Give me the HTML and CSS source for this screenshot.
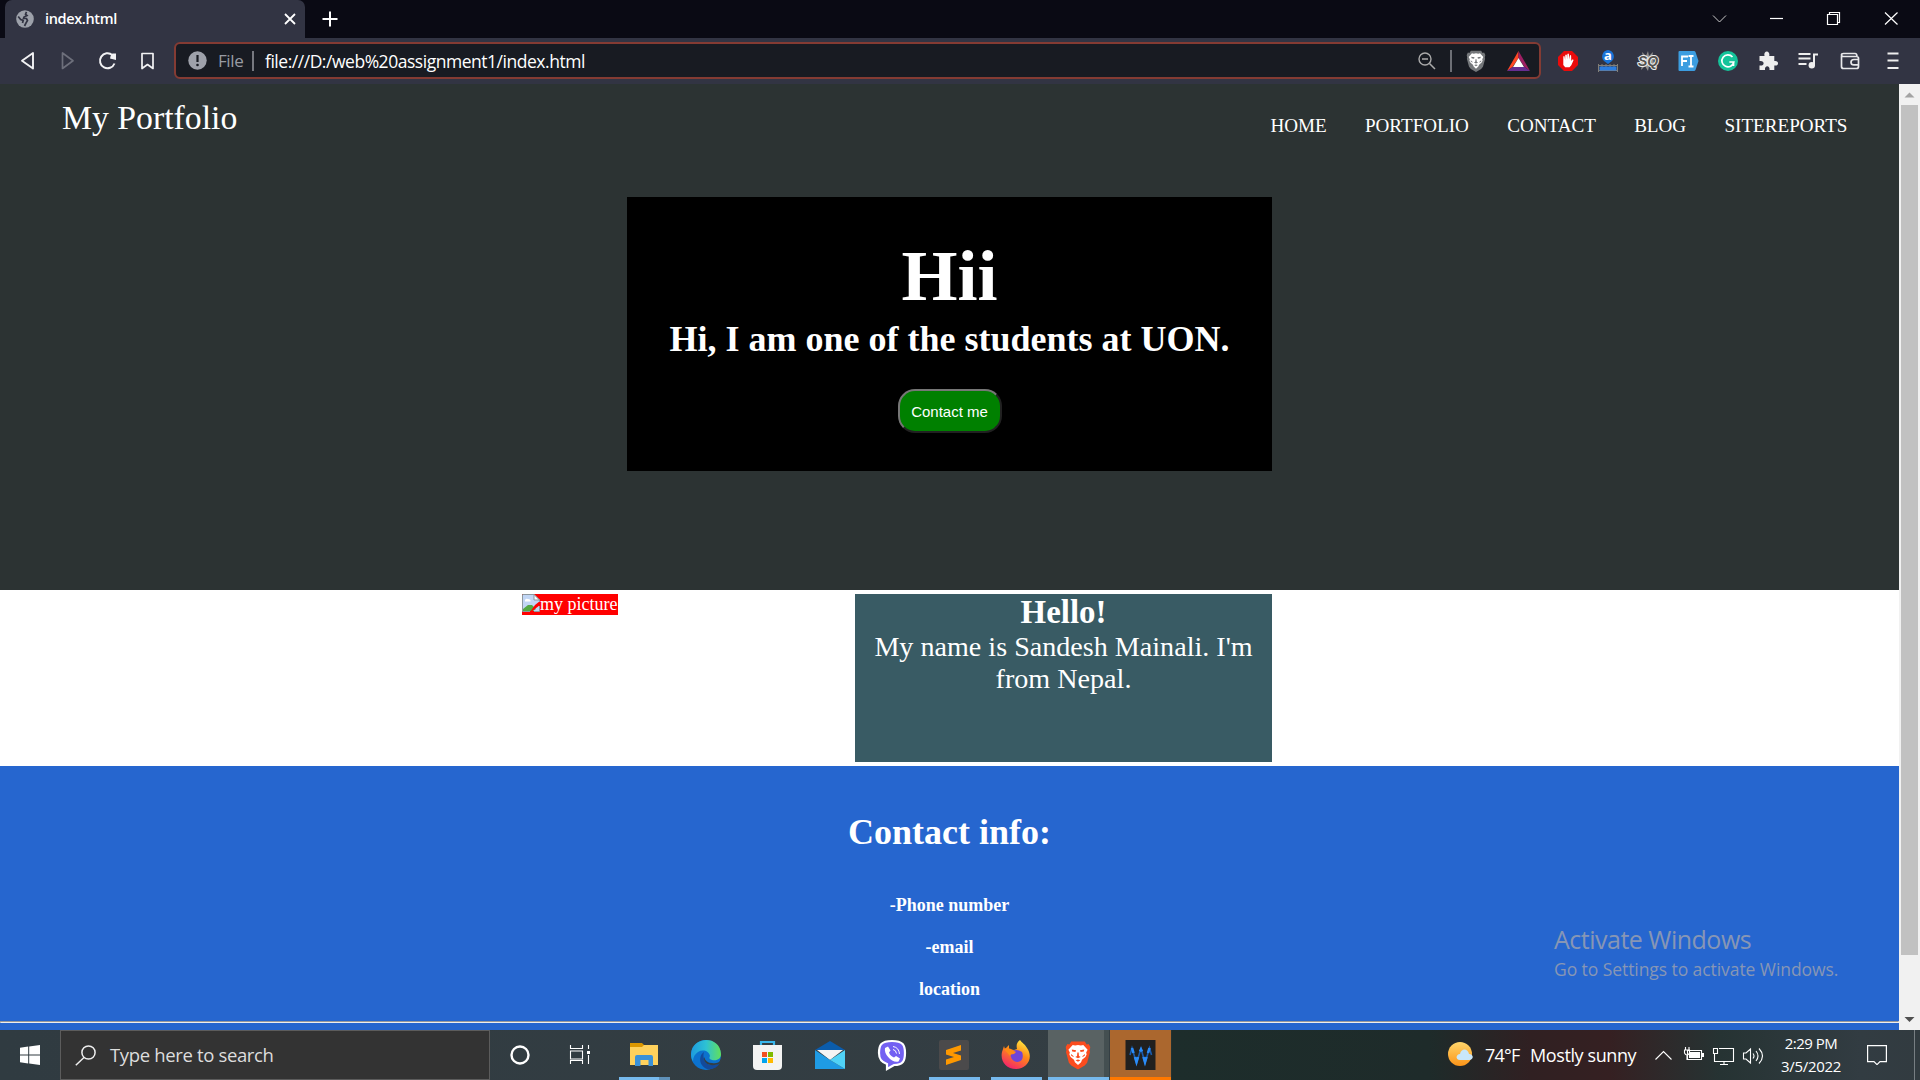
FILE: index.html
```html
<!DOCTYPE html>
<html lang="en">
<head>
<meta charset="utf-8">
<title>index.html</title>
<link rel="stylesheet" href="styles.css">
</head>
<body>
<svg class="defs" width="0" height="0">
  <symbol id="lion" viewBox="0 0 26 30">
    <path d="M6 1h14l2 3 2-.5 2 3.500-1 3 .5 2-3 11-2.500 3L13 30l-7-4-2.500-3L.5 12 1 10 0 7l2-3.500L4 4z"/>
    <path fill="#fff" d="M7.500 4.500l2.500.7 3-.7 3 .7 2.500-.7 4.500 5-1.500 3 .5 2-1.300 2.500-3.500 3-1 2.500L13 25.500l-3.200-3L8.800 20l-3.500-3L4 14.500l.5-2L3 9.500z"/>
    <path d="M6.500 9.200l4.500.8-.7 2-3.300-.6zM19.500 9.200l-4.500.8.700 2 3.300-.6zM12.300 12.500h1.400l.3 3.500 1.800 1L13 18.500 10.200 17l1.800-1zM5.800 14l2.700 2.200-.4 1L5.800 15.600zM20.200 14l-2.700 2.200.4 1 2.300-1.600zM10.500 20.500l2.500-.8 2.500.8L13 22z"/>
  </symbol>
</svg>

<header class="tabs">
  <div class="tab">
    <svg width="18" height="18" viewBox="0 0 18 18"><circle cx="9" cy="9" r="8.800" fill="#9da1aa"/><path d="M10.500 1.800l-1 2.400 1.500 1.300-3 1.500-.5 1.500h3l1 2-1.500 2.500-1.500 3M2.200 6.500l2.500 3 2.500 1-.7 2.500" fill="none" stroke="#323443" stroke-width="1.700"/></svg>
    <span class="tab-title">index.html</span>
    <svg width="12" height="12" viewBox="0 0 12 12"><path d="M1 1l10 10M11 1L1 11" stroke="#fff" stroke-width="1.800"/></svg>
  </div>
  <svg class="new-tab" width="16" height="16" viewBox="0 0 16 16"><path d="M8 .5v15M.5 8h15" stroke="#fff" stroke-width="2"/></svg>
  <div class="window-controls">
    <svg viewBox="0 0 56 38"><path d="M20.500 15.500l6.500 6.500 6.500-6.500" fill="none" stroke="#ccc" stroke-width="1"/></svg>
    <svg viewBox="0 0 56 38"><path d="M20.500 18.500h13" stroke="#fff" stroke-width="1.200"/></svg>
    <svg viewBox="0 0 56 38"><path d="M23 14.500v-2h10v10h-2M21 14.500h10v10h-10z" fill="none" stroke="#fff" stroke-width="1.200"/></svg>
    <svg viewBox="0 0 56 38"><path d="M21.500 12.500l12.500 12M34 12.500l-12.500 12" stroke="#fff" stroke-width="1.200"/></svg>
  </div>
</header>

<nav class="toolbar">
  <div class="history">
    <svg viewBox="0 0 40 40"><path d="M33 12v15.500l-11-7.750z" fill="none" stroke="#f2f2f4" stroke-width="1.900" stroke-linejoin="round"/></svg>
    <svg viewBox="0 0 40 40"><path d="M22.500 12v15.500l10.500-7.750z" fill="none" stroke="#6d6f7b" stroke-width="1.700" stroke-linejoin="round"/></svg>
    <svg viewBox="0 0 40 40"><path d="M34.500 22.500a7.500 7.500 0 1 1-2.200-8.500" fill="none" stroke="#f2f2f4" stroke-width="2"/><path d="M36 12.500v6.500l-6-1.500q1-5 3-5z" fill="#f2f2f4"/></svg>
    <svg viewBox="0 0 40 40"><path d="M22 12.500h11v15l-5.500-4-5.500 4z" fill="none" stroke="#f2f2f4" stroke-width="1.700" stroke-linejoin="round"/></svg>
  </div>
  <div class="address">
    <svg width="19" height="19" viewBox="0 0 19 19"><circle cx="9.500" cy="9.500" r="9.200" fill="#9ea1aa"/><path d="M9.500 4v7" stroke="#181b22" stroke-width="2.200"/><circle cx="9.500" cy="14" r="1.300" fill="#181b22"/></svg>
    <span class="scheme">File</span>
    <span class="url">file:///D:/web%20assignment1/index.html</span>
    <svg class="zoom" width="18" height="18" viewBox="0 0 18 18"><path d="M11.500 11.500l5.500 5.500M4 7h6" stroke="#aaa" stroke-width="1.500"/><circle cx="7" cy="7" r="6" fill="none" stroke="#aaa" stroke-width="1.400"/></svg>
    <svg class="shield" width="20" height="22" viewBox="0 0 26 30" fill="#74777a"><use href="#lion"/></svg>
    <svg width="23" height="20" viewBox="0 0 23 20"><path fill="#ff4724" d="M11.500 0v7L5.500 16 0 20z"/><path fill="#9e1f63" d="M11.500 0L23 20l-5.500-4-6-9z"/><path fill="#662d91" d="M0 20l5.500-4h12l5.500 4z"/><path fill="#fff" d="M11.500 7l5.500 9H6z"/></svg>
  </div>
  <div class="extensions">
    <svg viewBox="0 0 40 40"><path fill="#ea0b0b" d="M16 10h8l6 6v8l-6 6h-8l-6-6v-8z"/><path fill="#fff" d="M15.300 15.500q.8-1 1.300 0l.5 3.500.2-5q.8-1.200 1.500 0l.3 4.500.3-5.500q.8-1 1.500 0l.3 5.500.6-4q.8-1 1.300 0l.2 5.500 1-1.500q1.500-.3 1.200.8l-2.200 5-1.800 2h-4.300L15.300 24z"/></svg>
    <svg viewBox="0 0 40 40"><path fill="#1873d8" d="M20 9a6.500 6.500 0 0 1 4 11l-4 3-4-3a6.500 6.500 0 0 1 4-11z"/><text x="20" y="19" class="glyph-a">a</text><path d="M10.500 23v8M29.500 23v8M10 24.500h20M10 29.500h20M14 23v7M18 23v7M22 23v7M26 23v7" stroke="#817e78"/><path fill="#2b7de0" d="M11.500 25.500h17v4h-17z"/></svg>
    <svg viewBox="0 0 40 40"><path fill="#93918e" d="M20 10l1 5 4-4-1 5 5 0-4 4 4 3-5 0 1 5-4-3-1 5-3-5-4 4 1-5-5-1 4-3-4-4 6 0-1-5 4 4z"/><text x="20" y="25" class="glyph-sq">SQ</text></svg>
    <svg viewBox="0 0 40 40"><path fill="#3c9de0" d="M11.500 10H26q1 0 1.500 1l3 9-3 9q-.5 1-1.500 1H11.500q-1 0-1-1V11q0-1 1-1z"/><path d="M14 25v-9.500h6M14 20h5M20.500 15h5M20.500 25.500h5M23 15v10.500" fill="none" stroke="#fff" stroke-width="1.800"/></svg>
    <svg viewBox="0 0 40 40"><circle cx="20" cy="20" r="10" fill="#15c39a"/><path d="M24.500 16a6 6 0 1 0 1.300 5h-4.500M25.500 21v4" fill="none" stroke="#fff" stroke-width="1.700"/></svg>
    <svg viewBox="0 0 40 40"><path fill="#eee" d="M11.500 15h5c-1.500-6 6-6 4.800 0h5v5c5-1 5 5.500 0 4.500v4.500h-4.800c.8-5-5.300-5-4.500 0h-5.500v-4.500c5.500 1 5.500-5.500 0-4.500z"/></svg>
    <svg viewBox="0 0 40 40"><path d="M10.500 13h12M10.500 17.500h12M10.500 23h8M26 13.500v11M25 13.500h5" fill="none" stroke="#eee" stroke-width="2"/><circle cx="23.800" cy="24.200" r="3.200" fill="#eee"/></svg>
    <svg viewBox="-2 0 42 40"><path d="M11.500 15v10.500q0 2 2 2h13q2 0 2-2v-8q0-2-2-2h-13q-2 0-2-1.500t2-1.500h11.500q2 0 2 3M29 18.500h-5q-3 0-3 2.700t3 2.700h5" fill="none" stroke="#e8e8ea" stroke-width="1.700"/></svg>
    <svg viewBox="-3.500 0 42 40"><path d="M14 12.500h11M14 19.500h11M14 27h11" stroke="#eee" stroke-width="2"/></svg>
  </div>
</nav>

<div class="viewport">
  <main class="page">
    <section class="hero">
      <div class="topbar">
        <div class="brand">My Portfolio</div>
        <div class="links"><a>HOME</a><a>PORTFOLIO</a><a>CONTACT</a><a>BLOG</a><a>SITEREPORTS</a></div>
      </div>
      <div class="intro">
        <h1>Hii</h1>
        <h2>Hi, I am one of the students at UON.</h2>
        <button>Contact me</button>
      </div>
    </section>
    <section class="about">
      <div class="picture"><svg width="18" height="18" viewBox="0 0 18 18"><path fill="#c2d6f5" d="M1 1h11l5 5v11H1z"/><path fill="#fff" d="M3 6q1-2 3-1 3 0 2.500 2.500H3z"/><path fill="#54a944" d="M1 17v-2l5-4h4l4 4-3 2z"/><path fill="red" d="M18 7v4l-9 7H8l5-7z"/><path fill="none" stroke="#8d989f" d="M8 17.500H.5V.5H12l5.500 5.500v2M17.500 12v5.500H12"/><path fill="#fff" stroke="#8d989f" d="M12 .5V6h5.500z"/></svg>my picture</div>
      <div class="bio">
        <h3>Hello!</h3>
        <p>My name is Sandesh Mainali. I'm from Nepal.</p>
      </div>
    </section>
    <section class="contact">
      <h2>Contact info:</h2>
      <h4>-Phone number</h4>
      <h4>-email</h4>
      <h4>location</h4>
      <hr>
    </section>
  </main>
  <aside class="scrollbar">
    <svg width="21" height="21" viewBox="0 0 21 21"><path fill="#a3a3a3" d="M5.500 13.500L10.500 8.500l5 5z"/></svg>
    <div class="thumb"></div>
    <svg width="21" height="21" viewBox="0 0 21 21"><path fill="#505050" d="M5.500 8l5 5 5-5z"/></svg>
  </aside>
  <div class="watermark"><div class="wm-title">Activate Windows</div><div class="wm-text">Go to Settings to activate Windows.</div></div>
</div>

<footer class="taskbar">
  <div class="start"><svg width="20" height="20" viewBox="0 0 20 20"><path fill="#fff" d="M0 2.800l8.200-1.200V9.500H0zM9.200 1.400L20 0v9.500H9.200zM0 10.500h8.200v8L0 17.300zM9.200 10.500H20V20L9.200 18.600z"/></svg></div>
  <div class="search">
    <svg width="21" height="21" viewBox="0 0 21 21"><circle cx="13.500" cy="7.500" r="6.600" fill="none" stroke="#eee" stroke-width="1.500"/><path d="M9 12.500L.8 20.300" stroke="#eee" stroke-width="1.500"/></svg>
    <span>Type here to search</span>
  </div>
  <div class="system-apps">
    <svg viewBox="0 0 60 50"><circle cx="30" cy="25" r="8.500" fill="none" stroke="#fff" stroke-width="2.400"/></svg>
    <svg viewBox="0 0 60 50"><path d="M20.500 15v3.500h12V15M20.500 34v-3.500h12V34M20.500 21h12v8h-12zM38.500 15v4M38.500 25v9" fill="none" stroke="#fff" stroke-width="1.100"/><path fill="#fff" d="M37 21h3v3h-3z"/></svg>
  </div>
  <div class="apps">
    <div class="app running grouped"><svg viewBox="0 0 62 50"><path fill="#dc9700" d="M17 13h12l2 2v4H17z"/><path fill="#ffd15c" d="M17 17h12l2-2h14v20H17z"/><path fill="#3b91d8" d="M22 35v-8q0-2 2-2h14q2 0 2 2v9h-4.500v-6h-8v6H22z"/></svg></div>
    <div class="app"><svg viewBox="0 0 62 50"><defs><linearGradient id="eg"><stop stop-color="#1d9bdf"/><stop offset=".5" stop-color="#2dc1d4"/><stop offset="1" stop-color="#62e05a"/></linearGradient></defs><circle cx="31" cy="25" r="15" fill="#0c72ce"/><path fill="url(#eg)" d="M16 24c1-18 29-19 30 0 0 5-4 7-9 6-3-1-3-2-2-4-1-5-7-7-12-4-3 2-5 5-5 9-1-1-2-4-2-7z"/><path fill="#134a9b" d="M29 22c-5 3-6 13 3 17 5 1 10-1 13-6-9 4-15 1-16-4-.5-2-1-4 0-7z"/><path fill="#343e43" d="M29 27q2 6 8 6 6 1 9-3v2l-2 2c-8 3-16 0-15-7z"/></svg></div>
    <div class="app"><svg viewBox="0 0 62 50"><path d="M24 18v-6h13v6" fill="none" stroke="#39b6ec" stroke-width="2.200"/><path fill="#f3f3f3" d="M16 15h29v21q0 4-4 4H20q-4 0-4-4z"/><path fill="#f25022" d="M25 22h5v5h-5z"/><path fill="#7fba00" d="M31 22h5v5h-5z"/><path fill="#00a4ef" d="M25 28h5v5h-5z"/><path fill="#ffb900" d="M31 28h5v5h-5z"/></svg></div>
    <div class="app"><svg viewBox="0 0 62 50"><path fill="#0b5cab" d="M16 20l15-9 15 9z"/><path fill="#f4f4f4" d="M18 20h26L31 30z"/><path fill="#1f9be4" d="M16 20l15 10 15 9H16z"/><path fill="#50d2f6" d="M46 20L31 30l15 9z"/></svg></div>
    <div class="app"><svg viewBox="0 0 62 50"><path d="M31 11c11 0 13 4 13 12s-2 12-11 12l-7 4v-5c-6-2-8-5-8-11 0-8 2-12 13-12z" fill="#7360f2" stroke="#fff" stroke-width="2.200"/><path fill="#fff" d="M24 18l3-1.500 2.500 4-1.500 2c1 3 3 4 5 5l2-1.500 4 2.500-1.500 3c-6 2-15-7-13.500-13.500z"/><path d="M32 16.500q6 1 6.500 7.500M32 19.500q3 .5 3.500 4" fill="none" stroke="#fff"/></svg></div>
    <div class="app running"><svg viewBox="0 0 62 50"><rect x="16" y="10" width="30" height="30" rx="2" fill="#4b4a4b"/><path fill="#ff9800" d="M23 20l15-5v5.500l-8 2.500 8 2.500V30l-15 5v-5.500l8-2.500-8-2.500z"/></svg></div>
    <div class="app running"><svg viewBox="0 0 62 50"><defs><linearGradient id="fx" x1=".8" y1="0" x2=".3" y2="1"><stop stop-color="#fff044"/><stop offset=".45" stop-color="#ff8a16"/><stop offset="1" stop-color="#f4216d"/></linearGradient></defs><path fill="url(#fx)" d="M35 10c2 3 5 4 7 8 7 10 0 21-11 21-10 0-16-8-14-17l2-6 1 3 4-4v4l5 1 3-1c-1-4 0-7 3-9z"/><path fill="#7045d6" d="M26 22q5-4 11 0c3 8-3 12-8 9-3-2-4-5-3-9z"/><path fill="#ff8a16" d="M19 19q4-3 10 2l2 1-2 2q-4 0-4 2z"/></svg></div>
    <div class="app running active"><svg viewBox="0 0 62 50"><svg x="18.500" y="10" width="25" height="30" viewBox="0 0 26 30" fill="#fb4c1e"><use href="#lion"/></svg></svg></div>
    <div class="app alert"><svg viewBox="0 0 62 50"><path fill="#20201f" d="M15.500 10h30v30h-30z"/><path d="M20 25l2-7 4.500 15L31 18.500 35 33l4.500-15 2 7" fill="none" stroke="#1b5cae" stroke-width="1.600"/><path d="M22 18l1.500 5M25 27l1.500 5 1.500-5M30 21.500l1-2 1 2M33.500 27l1.500 5 1.500-5M38 23l1.500-5" fill="none" stroke="#2b8cf8" stroke-width="2.600"/></svg></div>
  </div>
  <div class="tray">
    <svg width="26" height="26" viewBox="0 0 26 26"><defs><linearGradient id="sun" x2="0" y2="1"><stop stop-color="#ffd66b"/><stop offset="1" stop-color="#fb9418"/></linearGradient></defs><circle cx="12" cy="12" r="12" fill="url(#sun)"/><path fill="#c9e7fa" d="M12 18c-5 0-4-6 0-6 1-6 8-6 9 0 5 0 5 6 0 6z"/></svg>
    <span class="weather"><span class="temp">74°F</span><span class="sky">Mostly sunny</span></span>
    <svg class="status" width="110" height="20" viewBox="0 0 110 20"><g fill="none" stroke="#fff" stroke-width="1.100"><path d="M.5 14.500l8-8 8 8M32.500 5.500h14v9h-14z"/><path d="M30.500 2v3M34 2v3M29.500 5h5v3q-1 2-2.500 2t-2.500-2zM32 10v5M59.500 8v8.500h19v-13H64M69 16.500v3M65 19.500h8M58.500 3.500h4v5h-4z"/><path d="M88.500 8v6h2.500l4.500 4V4L91 8zM98 8.500q2 2.500 0 5M101 6q4 5 0 10M104 3.500q7 7.500 0 15"/></g><path fill="#fff" d="M34 7h11v6H34zM47 8h2v4h-2z"/></svg>
    <div class="clock"><span>2:29 PM</span><span class="date">3/5/2022</span></div>
    <svg class="notice" width="20" height="20" viewBox="0 0 20 20"><path d="M.6.6h18.800v16H13l-3 3-3-3H.6z" fill="none" stroke="#fff" stroke-width="1.200"/></svg>
    <div class="show-desktop"></div>
  </div>
</footer>
</body>
</html>
```
FILE: styles.css
```css
* { box-sizing: border-box; margin: 0; padding: 0; }
body {
  width: 1920px;
  height: 1080px;
  overflow: hidden;
  display: flex;
  flex-direction: column;
  font-family: "Open Sans", "Noto Sans", sans-serif;
  color: #fff;
}
svg { display: block; flex: none; }
span, .wm-title, .wm-text { white-space: nowrap; }
.defs { display: none; }

/* Browser chrome */
.tabs { height: 38px; flex: none; background: #0a0a14; display: flex; align-items: center; padding-left: 5px; }
.tab { width: 300px; height: 38px; background: #323443; border-radius: 7px 7px 0 0; display: flex; align-items: center; padding: 0 9px 0 11px; }
.tab-title { margin-left: 11px; padding-bottom: 2px; flex: 1; font-size: 14.500px; font-weight: 600; letter-spacing: -.35px; }
.new-tab { margin-left: 17px; }
.window-controls { display: flex; margin-left: auto; }
.window-controls svg { width: 57px; height: 38px; }
.toolbar { height: 46px; flex: none; background: #323443; display: flex; align-items: center; padding-bottom: 1px; }
.history { display: flex; width: 174px; }
.history svg { width: 40px; height: 40px; }
.address { width: 1367px; height: 37px; border: 2px solid #843b33; border-radius: 6px; background: #181b22; display: flex; align-items: center; padding: 0 9px 0 12px; }
.scheme { margin-left: 11px; width: 36px; line-height: 20px; border-right: 2px solid #777980; color: #989ba3; font-size: 17px; letter-spacing: -.4px; }
.url { margin-left: 11px; font-size: 17.500px; letter-spacing: -.47px; }
.zoom { margin-left: auto; }
.shield { box-sizing: content-box; margin-left: 14px; margin-right: 21px; border-left: 2px solid #6d6f75; padding-left: 14px; }
.extensions { display: flex; padding-left: 7px; }
.extensions svg { width: 40px; height: 40px; }
.extensions svg:nth-last-child(-n+2) { width: 42px; }
.glyph-a { font: bold 13px "Noto Sans", sans-serif; fill: #fff; text-anchor: middle; }
.glyph-sq { font: italic bold 14px "Liberation Sans", sans-serif; fill: #54524f; stroke: #eee; stroke-width: 2px; paint-order: stroke; text-anchor: middle; }

/* Page */
.viewport { height: 946px; flex: none; display: flex; position: relative; overflow: hidden; }
.page { width: 1899px; font-family: "Liberation Serif", serif; font-size: 18px; background: #fff; }
.hero { height: 506px; background: #2c3333; }
.topbar { height: 113px; padding: 14px 51.500px 0 62px; display: flex; justify-content: space-between; }
.brand { font-size: 33.750px; line-height: 39px; }
.links { display: flex; gap: 38.250px; padding-top: 17px; font-size: 19.125px; line-height: 22px; }
.intro { width: 645px; height: 274px; margin: 0 auto; padding-top: 39px; background: #000; text-align: center; }
.intro h1 { font-size: 72px; line-height: 81px; }
.intro h2 { margin-top: 2px; font-size: 36px; line-height: 41px; }
.intro button { width: 104px; height: 44px; margin-top: 29px; border: 2px outset #767676; border-radius: 17px; background: green; color: #fff; font: 15px "Liberation Sans", sans-serif; white-space: nowrap; }
.about { height: 176px; width: 750px; margin-left: 522px; padding-top: 4px; display: flex; justify-content: space-between; align-items: flex-start; }
.picture { display: flex; width: 96px; height: 21px; line-height: 21px; white-space: nowrap; background: red; }
.bio { width: 417px; height: 168px; padding: 0 11px; background: #395b64; text-align: center; }
.bio h3 { font-size: 32.900px; line-height: 37px; }
.bio p { font-size: 28.125px; line-height: 32px; }
.contact { height: 264px; padding-top: 46px; background: #2666cf; text-align: center; }
.contact h2 { font-size: 36px; line-height: 41px; margin-bottom: 42px; }
.contact h4 { font-size: 18px; line-height: 21px; margin-bottom: 21px; }
.contact hr { border: 1px solid; border-color: #9a9a9a #eee #eee #9a9a9a; }
.scrollbar { width: 21px; background: #f1f1f1; display: flex; flex-direction: column; }
.thumb { height: 850px; margin: 0 2px 54px; background: #c1c1c1; }
.watermark { position: absolute; left: 1554px; top: 837px; color: #8796b5; }
.wm-title { font-size: 25px; line-height: 36px; letter-spacing: -.5px; }
.wm-text { font-size: 17.500px; line-height: 24px; letter-spacing: -.07px; }

/* Taskbar */
.taskbar { height: 50px; flex: none; display: flex; background: linear-gradient(90deg, #303b41 0, #343e43 1170px, #1d2d2b 1172px, #1e2b2a 1430px, #302022 1530px, #352022 1610px, #263333 1720px, #323c42 1860px, #323b40); }
.start { width: 60px; display: grid; place-items: center; }
.search { width: 430px; border: 1px solid #5c5c5c; background: #333; display: flex; align-items: center; padding-left: 14px; gap: 14px; font-size: 18.500px; letter-spacing: -.35px; color: #ddd; }
.search span { padding-bottom: 2px; }
.system-apps { display: flex; width: 123px; }
.system-apps svg { width: 60px; height: 50px; }
.apps { display: flex; }
.app { width: 62px; height: 50px; display: grid; }
.app svg { grid-area: 1 / 1; width: 62px; height: 50px; }
.app svg svg { width: 25px; height: 30px; }
.running::after { content: ""; grid-area: 1 / 1; align-self: end; justify-self: center; width: 51px; height: 3px; background: #76b9ed; }
.grouped::after { background: linear-gradient(90deg, #76b9ed 40px, #5f91b9 40px); }
.active { background: linear-gradient(90deg, transparent 1px, #596263 1px, #596263 57px, #444f51 57px); }
.active::after { width: 61px; justify-self: end; }
.alert { width: 61px; overflow: hidden; background: #ab672e; border-bottom: 3px solid #ff7800; margin-left: 1px; }
.tray { display: flex; flex: 1; align-items: center; padding-left: 277px; }
.weather { display: flex; width: 170px; margin-left: 11px; padding-bottom: 1px; font-size: 18px; }
.temp { width: 45px; letter-spacing: -.8px; }
.sky { letter-spacing: -.4px; }
.clock { width: 100px; margin-left: -4px; font-size: 15px; line-height: 23px; letter-spacing: -.5px; display: flex; flex-direction: column; align-items: center; }
.date { letter-spacing: -.3px; }
.notice { margin-left: 6px; }
.show-desktop { width: 6px; height: 50px; margin-left: auto; border-left: 1px solid #777e82; }
```
